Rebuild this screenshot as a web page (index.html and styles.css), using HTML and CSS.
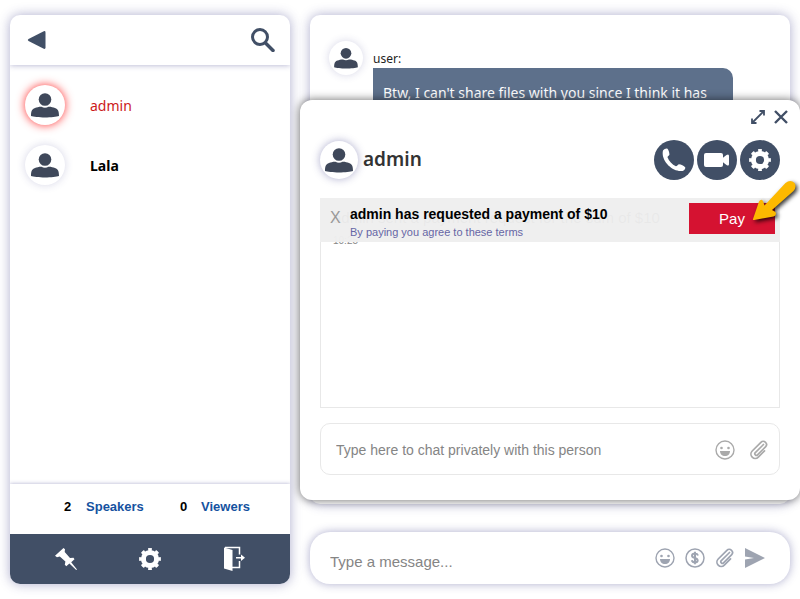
FILE: index.html
```
<!DOCTYPE html>
<html lang="en">
<head>
  <meta charset="UTF-8" />
  <meta name="viewport" content="width=device-width, initial-scale=1" />
  <title>Chat</title>
  <link rel="stylesheet" href="styles.css">
</head>
<body>

  <!-- Shared icons -->
  <svg class="sprite" aria-hidden="true">
    <symbol id="i-user" viewBox="0 0 28 26">
      <circle cx="14" cy="7.500" r="6.300" />
      <path d="M0 24c0-5 1-7 4-8 2-.7 4.500-1.400 6.500-1.200 2 1.200 5 1.200 7 0 2-.2 4.500.5 6.500 1.200 3 1 4 3 4 8-4.500 1.900-23.500 1.900-28 0z" />
    </symbol>
    <symbol id="i-gear" viewBox="0 0 24 24">
      <circle cx="12" cy="12" r="6.600" fill="none" stroke="currentColor" stroke-width="5" />
      <circle cx="12" cy="12" r="9.400" fill="none" stroke="currentColor" stroke-width="3" pathLength="16" stroke-dasharray="1 1" stroke-dashoffset=".5" />
    </symbol>
    <symbol id="i-smile" viewBox="0 0 20 20">
      <circle cx="10" cy="10" r="9" fill="none" stroke="currentColor" stroke-width="1.400" />
      <circle cx="6.500" cy="8" r="1.300" />
      <circle cx="13.500" cy="8" r="1.300" />
      <path d="M5 11h10c0 3-2 5-5 5s-5-2-5-5z" />
    </symbol>
    <symbol id="i-clip" viewBox="0 0 20 20">
      <path fill="none" stroke="currentColor" stroke-width="1.700" stroke-linecap="round" stroke-linejoin="round" d="M12.500 6.500 6.300 12.700a1.500 1.500 0 0 0 2.200 2.200l8-8a3.200 3.200 0 0 0-4.600-4.600L3.200 11a4.300 4.300 0 0 0 6.100 6.100l6.200-6.200M14.500 4.500l-1.500 1.500" />
    </symbol>
  </svg>

  <aside class="sidebar">
    <header class="sidebar-top">
      <button class="icon-btn" aria-label="Back">
        <svg width="20" height="20" viewBox="0 0 20 20"><path d="M1.500 9 16.800 1.200q1.700-.6 1.700 1.200v15.200q0 1.800-1.700 1.200L1.500 11q-1.500-1 0-2z" /></svg>
      </button>
      <button class="icon-btn" aria-label="Search">
        <svg class="line" width="24" height="24" viewBox="0 0 24 24"><circle cx="9" cy="9" r="7.500" stroke-width="3" /><path d="m14.500 15 7.500 7.500" stroke-width="3.500" stroke-linecap="round" /></svg>
      </button>
    </header>

    <ul class="people">
      <li class="person alert">
        <span class="avatar"><svg><use href="#i-user" /></svg></span>
        <span class="name">admin</span>
      </li>
      <li class="person">
        <span class="avatar"><svg><use href="#i-user" /></svg></span>
        <span class="name bold">Lala</span>
      </li>
    </ul>

    <div class="counts">
      <span>2</span><a href="#speakers">Speakers</a>
      <span>0</span><a href="#viewers">Viewers</a>
    </div>

    <nav class="toolbar">
      <button class="icon-btn" aria-label="Pin">
        <svg width="24" height="24" viewBox="0 0 24 24"><path d="M9.500 1 11 2.300l-.3 2.700 5.300 6 3.500-.2 1 1.400-3.300 3 5.800 7.300-.8.500-6.800-6.400-3.100 2.700-1.500-1.500.6-3.200-5.600-5.200L3 10.200 1 8.700z" /></svg>
      </button>
      <button class="icon-btn" aria-label="Settings"><svg width="24" height="24"><use href="#i-gear" /></svg></button>
      <button class="icon-btn" aria-label="Leave">
        <svg width="24" height="26" viewBox="0 0 24 26"><path d="M2 1.500 10.500 4v21L2 22.500z" /><path d="M3 1.500h14.500v7M17.500 15v6.500H10M14 11.800h6" fill="none" stroke="currentColor" stroke-width="1.500" /><path d="m19 8.500 4 3.300-4 3.300z" /></svg>
      </button>
    </nav>
  </aside>

  <main class="room">
    <section class="messages">
      <span class="avatar small"><svg><use href="#i-user" /></svg></span>
      <div class="message">
        <div class="author">user:</div>
        <div class="bubble">Btw, I can't share files with you since I think it has</div>
      </div>
    </section>

    <form class="composer">
      <input type="text" placeholder="Type a message..." aria-label="Message" />
      <button type="button" class="icon-btn" aria-label="Emoji"><svg width="20" height="20"><use href="#i-smile" /></svg></button>
      <button type="button" class="icon-btn" aria-label="Payment">
        <svg class="line" width="20" height="20" viewBox="0 0 20 20"><circle cx="10" cy="10" r="9" stroke-width="1.500" /><path d="M13 7.500C12.500 6 11.300 5.600 10 5.600c-3.700 0-4 3.500-.5 4.300 4.300.8 4 4.600.5 4.600-1.800 0-2.800-.7-3.200-2.200M10 3.800v12.400" stroke-width="2" /></svg>
      </button>
      <button type="button" class="icon-btn" aria-label="Attach"><svg width="20" height="20"><use href="#i-clip" /></svg></button>
      <button type="button" class="icon-btn" aria-label="Send">
        <svg width="20" height="20" viewBox="0 0 20 20"><path d="M0 0 20 10 0 20v-8.500L9 10 0 8.500z" /></svg>
      </button>
    </form>
  </main>

  <!-- Private chat window -->
  <section class="private">
    <div class="window-btns">
      <button class="icon-btn" aria-label="Expand">
        <svg class="line" width="14" height="14" viewBox="0 0 14 14" stroke-width="1.800"><path d="M1 13 13 1M8.500 1H13v4.500M1 8.500V13h4.500" /></svg>
      </button>
      <button class="icon-btn" aria-label="Close">
        <svg class="line" width="14" height="14" viewBox="0 0 14 14" stroke-width="2.400"><path d="m1 1 12 12M13 1 1 13" /></svg>
      </button>
    </div>

    <header class="private-head">
      <span class="avatar medium"><svg><use href="#i-user" /></svg></span>
      <h2>admin</h2>
      <button class="round" aria-label="Call">
        <svg width="26" height="26" viewBox="0 0 26 26"><path d="M2 3.500C3 2 5 1.200 6.200 1.500c1.300 1.200 2.400 4.300 2.200 6.200-.6 1.200-1.700 1.500-1.900 2.500 1.300 3.700 4.700 7.300 8.400 9 1.300 0 1.600-1.500 3-2 2 .2 5.200 1.700 6.400 3.200.2 1.500-1.200 3-2.700 3.500C11.500 25.500-.5 13.500 2 3.500z" /></svg>
      </button>
      <button class="round" aria-label="Video">
        <svg width="26" height="14" viewBox="0 0 26 14"><rect width="19" height="14" rx="2" /><path d="M18 5.500 22.500 2Q25 .5 25 3v8q0 2.500-2.500 1L18 8.500z" /></svg>
      </button>
      <button class="round" aria-label="Settings"><svg width="24" height="24"><use href="#i-gear" /></svg></button>
    </header>

    <div class="log">
      <p>admin sent a payment request for the sum of $10</p>
      <time>10:25</time>
      <div class="notice">
        <button class="dismiss" aria-label="Dismiss">X</button>
        <div class="notice-text">
          <strong>admin has requested a payment of $10</strong>
          <a href="#terms">By paying you agree to these terms</a>
        </div>
        <button class="pay">Pay</button>
      </div>
    </div>

    <form class="private-composer">
      <input type="text" placeholder="Type here to chat privately with this person" aria-label="Private message" />
      <button type="button" class="icon-btn" aria-label="Emoji"><svg width="20" height="20"><use href="#i-smile" /></svg></button>
      <button type="button" class="icon-btn" aria-label="Attach"><svg width="20" height="20"><use href="#i-clip" /></svg></button>
    </form>

    <svg class="pointer" width="46" height="42" viewBox="0 0 46 42" aria-hidden="true">
      <path d="M1 39 7 21.500q2-3 4-.5l1.500 4.500L33.500 3q5-4 9 0 2.500 4-1 8L20 30l3.500 2q1.500 3.500-2 4.500L2 40q-1.500 0-1-1z" />
    </svg>
  </section>

</body>
</html>
```
FILE: styles.css
```
:root {
  --navy: #414f66;
  --avatar: #3f485a;
  --bubble: #5d708b;
  --glow: rgba(50, 50, 130, 0.4);
  --line: #e8e8e8;
  --red: #d51231;
}
* {
  box-sizing: border-box;
}
body {
  display: grid;
  grid-template-columns: 280px minmax(0, 1fr);
  gap: 20px;
  position: relative;
  min-height: 100vh;
  margin: 0;
  padding: 15px 10px;
  background: #fff;
  color: #000;
  font-family: "Liberation Sans", Arial, sans-serif;
  overflow-x: hidden;
}
button {
  padding: 0;
  border: none;
  background: none;
  font-family: inherit;
  cursor: pointer;
}
input {
  flex: 1;
  min-width: 0;
  padding: 0;
  border: none;
  outline: none;
  background: none;
  font-family: inherit;
}
input::placeholder {
  color: #858585;
}
svg {
  display: block;
  fill: currentColor;
}
svg.line {
  fill: none;
  stroke: currentColor;
}
.sprite {
  position: absolute;
  width: 0;
  height: 0;
}
.icon-btn {
  color: inherit;
}

.avatar {
  display: flex;
  flex: none;
  align-items: center;
  justify-content: center;
  width: 40px;
  height: 40px;
  border-radius: 50%;
  background: #fff;
  color: var(--avatar);
  box-shadow: 0 0 8px rgba(50, 50, 130, 0.2);
}
.avatar svg {
  width: 28px;
  height: 26px;
}
.avatar.small {
  width: 34px;
  height: 34px;
}
.avatar.small svg {
  width: 24px;
  height: 22px;
}
.avatar.medium {
  width: 38px;
  height: 38px;
  box-shadow: 0 0 8px var(--glow);
}

/* Left column */
.sidebar {
  display: flex;
  flex-direction: column;
  border-radius: 10px;
  box-shadow: 0 0 12px var(--glow);
  overflow: hidden;
}
.sidebar-top {
  display: flex;
  align-items: center;
  justify-content: space-between;
  height: 50px;
  padding: 0 15px 0 17px;
  color: var(--navy);
  box-shadow: 0 0 6px var(--glow);
}
.people {
  flex: 1;
  margin: 0;
  padding: 10px 15px;
  list-style: none;
}
.person {
  display: flex;
  align-items: center;
  gap: 25px;
  height: 60px;
  font: 14px "Noto Sans", sans-serif;
}
.person.alert {
  color: #cc1a1a;
}
.alert .avatar {
  box-shadow: 0 0 10px rgba(255, 0, 0, 0.8);
}
.bold {
  font-weight: 700;
}
.counts {
  display: grid;
  grid-template-columns: 22px 94px 21px auto;
  justify-content: center;
  align-items: center;
  height: 50px;
  padding: 0 0 6px 14px;
  box-shadow: 0 0 4px var(--glow);
  font-size: 13px;
  font-weight: 700;
}
.counts a {
  color: #1552a0;
  text-decoration: none;
}
.toolbar {
  display: flex;
  align-items: center;
  justify-content: space-between;
  height: 50px;
  padding: 0 44px;
  background: var(--navy);
  color: #fff;
}

/* Room */
.room {
  display: flex;
  flex-direction: column;
  gap: 28px;
}
.messages {
  display: flex;
  flex: 1;
  align-items: flex-start;
  gap: 10px;
  padding: 26px 57px 20px 19px;
  border-radius: 10px;
  box-shadow: 0 0 12px var(--glow);
}
.message {
  flex: 1;
  padding-top: 9px;
  font-family: "Noto Sans", sans-serif;
}
.author {
  color: #222;
  font-size: 12px;
  line-height: 18px;
}
.bubble {
  padding: 15px 10px;
  border-radius: 0 10px 10px 10px;
  background: var(--bubble);
  color: #fff;
  font-size: 14px;
  line-height: 20px;
}
.composer {
  display: flex;
  align-items: center;
  gap: 10px;
  height: 52px;
  padding: 0 25px 0 20px;
  border-radius: 20px;
  box-shadow: 0 0 10px var(--glow);
  color: #9ea4b1;
}
.composer input {
  height: 24px;
  margin-top: 6px;
  font-size: 15px;
}

/* Private chat, floats over the room */
.private {
  position: absolute;
  top: 100px;
  right: 0;
  left: 300px;
  padding: 10px 20px 25px;
  border-radius: 12px;
  background: #fff;
  box-shadow: 0 0 10px rgba(0, 0, 0, 0.6);
}
.window-btns {
  display: flex;
  align-items: flex-start;
  justify-content: flex-end;
  gap: 9px;
  height: 30px;
  margin-right: -8px;
  color: var(--navy);
}
.private-head {
  display: flex;
  align-items: center;
  gap: 3px;
}
.private-head h2 {
  flex: 1;
  margin: 0 0 0 2px;
  color: #333;
  font: 600 19px/24px "Noto Sans", sans-serif;
  padding-bottom: 2px;
}
.round {
  display: flex;
  align-items: center;
  justify-content: center;
  width: 40px;
  height: 40px;
  border-radius: 50%;
  background: var(--navy);
  color: #fff;
}
.log {
  position: relative;
  height: 210px;
  margin-top: 18px;
  padding: 10px 12px;
  border: 1px solid var(--line);
  color: #333;
}
.log p {
  margin: 0;
  font-size: 15px;
  line-height: 18px;
}
.log time {
  display: block;
  margin-top: 8px;
  color: #888;
  font-size: 10px;
  line-height: 12px;
}
.notice {
  display: flex;
  align-items: flex-start;
  position: absolute;
  top: -1px;
  right: -1px;
  left: -1px;
  height: 44px;
  padding: 5px 5px 0 10px;
  background: rgba(238, 238, 238, 0.97);
}
.dismiss {
  width: 20px;
  height: 30px;
  color: #999;
  font-size: 16px;
  text-align: left;
}
.notice-text {
  flex: 1;
  padding-top: 2px;
}
.notice-text strong {
  display: block;
  color: #000;
  font-size: 14px;
  line-height: 18px;
}
.notice-text a {
  display: block;
  color: #6666a5;
  font-size: 11px;
  line-height: 18px;
  text-decoration: none;
}
.pay {
  width: 86px;
  height: 31px;
  background: var(--red);
  color: #fff;
  font-size: 15px;
}
.private-composer {
  display: flex;
  align-items: center;
  gap: 14px;
  height: 52px;
  margin-top: 15px;
  padding: 2px 10px 0 15px;
  border: 1px solid var(--line);
  border-radius: 10px;
  color: #aaa;
}
.private-composer input {
  height: 20px;
  font-size: 14px;
}
.pointer {
  position: absolute;
  top: 80px;
  right: 2px;
  color: #fdb900;
  filter: drop-shadow(2px 2px 2px rgba(0, 0, 0, 0.8));
}
```
